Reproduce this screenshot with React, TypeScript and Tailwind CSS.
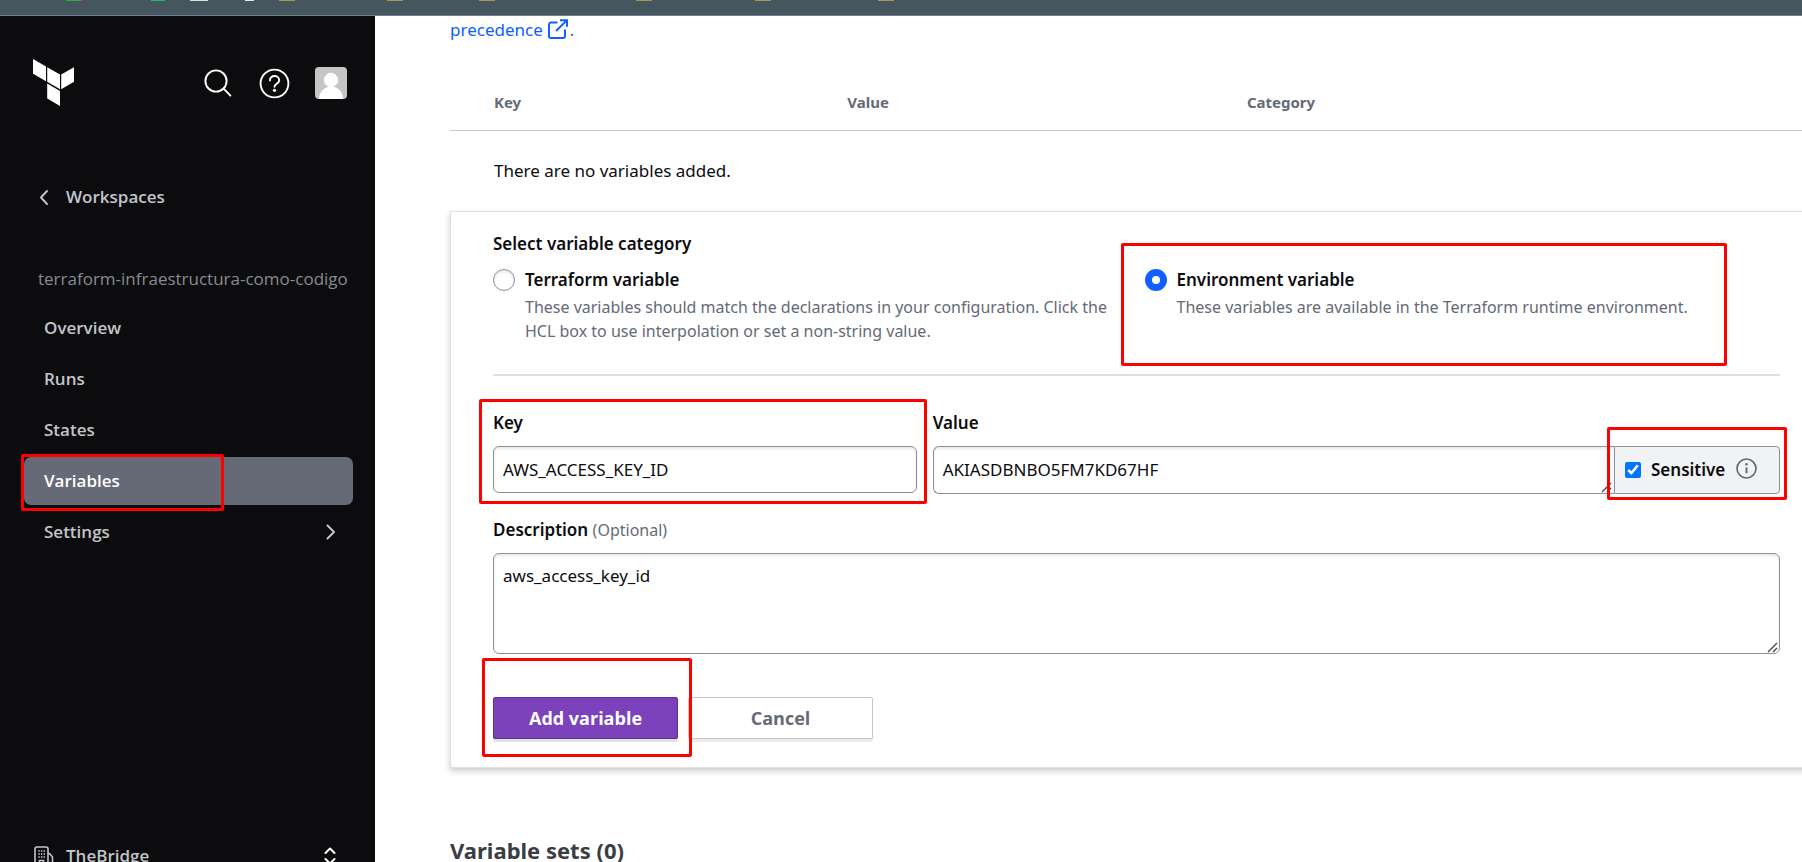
import React from "react";

const navItems = ["Overview", "Runs", "States", "Variables", "Settings"];

function Highlight({ className }: { className: string }) {
  return <div aria-hidden="true" className={`pointer-events-none absolute z-10 rounded-xs border-3 border-[#ff0000] ${className}`} />;
}

function ResizeGrip() {
  return (
    <svg width="11" height="11" viewBox="0 0 11 11" fill="none" stroke="#4a4a4a" strokeWidth="1.4" aria-hidden="true" className="pointer-events-none absolute right-[2px] bottom-[1px]">
      <path d="M1 10 10 1M6 10l4-4" />
    </svg>
  );
}

function BookmarkBar() {
  const folder = "h-px w-4 shrink-0 bg-[#a8964a]";
  return (
    <div className="flex h-4 items-start border-b border-[#6b7f8c] bg-[#45565f]" aria-hidden="true">
      <div className="ml-[62px] h-px w-[4px] bg-[#1a7a35]" />
      <div className="h-px w-[14px] bg-[#34a853]" />
      <div className="h-px w-[2px] bg-[#e0443a]" />
      <div className="ml-[69px] h-px w-[14px] bg-[#20c060]" />
      <div className="ml-[25px] h-px w-[18px] bg-[#d5e3da]" />
      <div className="ml-[37px] h-px w-[9px] bg-[#e4e6ee]" />
      <div className={`ml-[25px] ${folder}`} />
      <div className={`ml-[92px] ${folder}`} />
      <div className={`ml-[76px] ${folder}`} />
      <div className={`ml-[141px] ${folder}`} />
      <div className={`ml-[103px] ${folder}`} />
      <div className={`ml-[107px] ${folder}`} />
    </div>
  );
}

function TerraformLogo() {
  return (
    <svg width="42" height="48" viewBox="0 0 42 48" fill="#fff" aria-label="Terraform">
      <path d="M0 0 13 7.6V22.2L0 14.8z" />
      <path d="M14.2 8.2 27 15.6V30.2L14.2 22.8z" />
      <path d="M28.2 15.6 41 8.2V22.8L28.2 30.2z" />
      <path d="M14.2 24.6 27 32V47L14.2 39.5z" />
    </svg>
  );
}

function Sidebar() {
  return (
    <aside className="flex w-[375px] shrink-0 flex-col bg-[#0c0c0e] font-['Open_Sans','Noto_Sans',sans-serif] text-[17px] font-semibold text-[#c2c5cb]">
      <div className="mt-[42px] flex h-[50px] items-center pr-7 pl-[33px]">
        <a href="#home" className="mr-auto"><TerraformLogo /></a>
        <button type="button" aria-label="Search" className="mr-[27px]">
          <svg width="28" height="28" viewBox="0 0 28 28" fill="none" stroke="#fff" strokeWidth="1.9" strokeLinecap="round">
            <circle cx="12" cy="12" r="10.6" />
            <path d="M19.6 19.6 26.4 26.6" />
          </svg>
        </button>
        <button type="button" aria-label="Help" className="mr-[25px]">
          <svg width="31" height="31" viewBox="0 0 31 31" fill="none" stroke="#fff" strokeWidth="1.9" strokeLinecap="round" strokeLinejoin="round">
            <circle cx="15.5" cy="15.5" r="13.9" />
            <path d="M10.9 12.4c0-2.6 2-4.4 4.6-4.4s4.7 1.7 4.7 4.2c0 3.6-4.7 3.4-4.7 6.6" />
            <circle cx="15.5" cy="22.3" r="1.6" fill="#fff" stroke="none" />
          </svg>
        </button>
        <button type="button" aria-label="Account" className="overflow-hidden rounded-[4px]">
          <svg width="32" height="32" viewBox="0 0 32 32">
            <rect width="32" height="32" fill="#c5c5c5" />
            <circle cx="16" cy="13" r="7.2" fill="#fff" />
            <path d="M4 32c0-7 5-12.6 12-12.6S28 25 28 32z" fill="#fff" />
          </svg>
        </button>
      </div>

      <a href="#workspaces" className="mt-[75px] flex h-7 items-center pl-10">
        <svg width="8" height="15" viewBox="0 0 8 15" fill="none" stroke="currentColor" strokeWidth="1.9" strokeLinecap="round" strokeLinejoin="round" className="mr-[18px]">
          <path d="M7 1 1 7.5 7 14" />
        </svg>
        Workspaces
      </a>

      <div className="mt-[54px] flex h-7 items-center pl-[38px] font-medium whitespace-nowrap text-[#878a93]">
        terraform-infraestructura-como-codigo
      </div>

      <nav className="mt-[11px] flex flex-col gap-[3px] pr-[22px] pl-6">
        {navItems.map((item) => {
          const active = item === "Variables";
          return (
            <a
              key={item}
              href={`#${item.toLowerCase()}`}
              aria-current={active ? "page" : undefined}
              className={`relative flex h-12 items-center rounded-[7px] px-5 ${active ? "bg-[#656a76] text-white" : ""}`}
            >
              {item}
              {item === "Settings" && (
                <svg width="9" height="16" viewBox="0 0 9 16" fill="none" stroke="currentColor" strokeWidth="2" strokeLinecap="round" strokeLinejoin="round" className="mr-[-2px] ml-auto">
                  <path d="M1.5 1.5 8 8l-6.500 6.500" />
                </svg>
              )}
              {active && <Highlight className="-top-[3px] -bottom-[6px] -left-[3px] w-[203px]" />}
            </a>
          );
        })}
      </nav>

      <button type="button" className="mt-auto -mb-2 flex h-7 items-center pr-[39px] pl-[34px] text-left">
        <svg width="20" height="20" viewBox="0 0 20 20" fill="none" stroke="currentColor" strokeWidth="1.6" className="mr-3">
          <path d="M1 20V3a2 2 0 0 1 2-2h9a2 2 0 0 1 2 2v17M14 7.500h1.500L18.500 11v9" />
          <path d="M4.300 5h1.500M6.900 5h1.500M9.500 5H11M4.300 8h1.500M6.900 8h1.500M9.500 8H11M4.300 11h1.500M6.900 11h1.500M9.500 11H11M5.500 20v-5.500h4V20" />
        </svg>
        TheBridge
        <svg width="12" height="18" viewBox="0 0 12 18" fill="none" stroke="#fff" strokeWidth="2" strokeLinecap="round" strokeLinejoin="round" className="ml-auto">
          <path d="M1.500 6 6 1.500 10.500 6M1.500 12 6 16.500 10.500 12" />
        </svg>
      </button>
    </aside>
  );
}

const fieldClass =
  "block w-full resize-none border border-[#8c909c] bg-white px-[9px] text-[17px] leading-6 text-[#0c0c0e] shadow-[inset_0_2px_3px_rgba(101,106,118,0.15)]";

function VariableForm() {
  return (
    <form className="border border-[#dedfe3] bg-white pt-5 pr-[43px] pb-[28px] pl-[42px] shadow-[0_3px_6px_rgba(101,106,118,0.35)]" onSubmit={(e) => e.preventDefault()}>
      <fieldset>
        <legend className="text-[17px] leading-6 font-semibold">Select variable category</legend>
        <div className="mt-3 grid grid-cols-2 gap-4">
          <div className="flex items-start gap-[10px]">
            <input id="cat-terraform" type="radio" name="category" className="mt-px size-[22px] shrink-0 appearance-none rounded-full border border-[#8c909c] bg-white shadow-[inset_0_2px_3px_rgba(101,106,118,0.15)]" />
            <div>
              <label htmlFor="cat-terraform" className="block text-[17px] leading-6 font-semibold">Terraform variable</label>
              <p className="mt-[3px] text-[16px] leading-6 text-[#656a76]">
                These variables should match the declarations in your configuration. Click the HCL box to use interpolation or set a non-string value.
              </p>
            </div>
          </div>
          <div className="relative flex items-start gap-[10px]">
            <input id="cat-env" type="radio" name="category" defaultChecked className="mt-px size-[22px] shrink-0 appearance-none rounded-full border-[7px] border-[#1060ff] bg-white" />
            <div>
              <label htmlFor="cat-env" className="block text-[17px] leading-6 font-semibold">Environment variable</label>
              <p className="mt-[3px] text-[16px] leading-6 text-[#656a76]">These variables are available in the Terraform runtime environment.</p>
            </div>
            <Highlight className="-top-[25px] right-[53px] -bottom-[23px] -left-6" />
          </div>
        </div>
      </fieldset>

      <hr className="mt-[31px] border-t-2 border-[#dedfe3]" />

      <div className="mt-[35px] grid grid-cols-[1fr_2fr] gap-4">
        <div className="relative">
          <label htmlFor="key" className="block text-[17px] leading-6 font-semibold">Key</label>
          <input id="key" type="text" defaultValue="AWS_ACCESS_KEY_ID" className={`mt-[11px] h-[47px] rounded-[6px] ${fieldClass}`} />
          <Highlight className="-top-3 -right-[10px] -bottom-[10px] -left-[14px]" />
        </div>
        <div>
          <label htmlFor="value" className="block text-[17px] leading-6 font-semibold">Value</label>
          <div className="mt-[11px] flex h-12">
            <div className="relative min-w-0 flex-1">
              <textarea id="value" rows={1} defaultValue="AKIASDBNBO5FM7KD67HF" className={`h-12 overflow-hidden rounded-l-[6px] border-r-0 py-[11px] ${fieldClass}`} />
              <ResizeGrip />
            </div>
            <div className="relative flex w-[166px] shrink-0 items-center rounded-r-[4px] border border-[#8c909c] bg-[#f1f2f3] pl-[10px]">
              <input id="sensitive" type="checkbox" defaultChecked className="size-4 accent-[#0075ff]" />
              <label htmlFor="sensitive" className="ml-[10px] text-[17px] leading-6 font-semibold">Sensitive</label>
              <svg width="21" height="21" viewBox="0 0 21 21" fill="none" stroke="#656a76" strokeWidth="1.7" className="mb-[3px] ml-[11px]">
                <circle cx="10.500" cy="10.500" r="9.500" />
                <path d="M10.500 9.500v5.700" strokeWidth="2" />
                <circle cx="10.500" cy="6.300" r="1.300" fill="#656a76" stroke="none" />
              </svg>
              <Highlight className="-top-5 -right-2 -bottom-[7px] -left-2" />
            </div>
          </div>
        </div>
      </div>

      <label htmlFor="description" className="mt-6 block text-[17px] leading-6 font-semibold">
        Description <span className="text-[16px] font-normal text-[#656a76]">(Optional)</span>
      </label>
      <div className="relative mt-[11px]">
        <textarea id="description" defaultValue="aws_access_key_id" className={`h-[101px] rounded-[6px] py-[10px] ${fieldClass}`} />
        <ResizeGrip />
      </div>

      <div className="mt-[43px] flex gap-[10px] font-['Open_Sans','Noto_Sans',sans-serif] text-[18px] font-bold">
        <div className="relative">
          <button type="submit" className="block h-[42px] w-[185px] rounded-xs border border-[#5c3391] bg-[#7b42bc] text-white shadow-[0_3px_1px_rgba(0,0,0,0.12)]">Add variable</button>
          <Highlight className="-top-[39px] -right-[14px] -bottom-[18px] -left-[11px]" />
        </div>
        <button type="button" className="block h-[42px] w-[185px] rounded-xs border border-[#c2c5cb] bg-white text-[#656a76] shadow-[0_3px_1px_rgba(0,0,0,0.08)]">Cancel</button>
      </div>
    </form>
  );
}

export default function App() {
  return (
    <div className="relative flex h-screen flex-col overflow-hidden bg-white font-['Noto_Sans','Open_Sans',sans-serif] text-[#0c0c0e]">
      <BookmarkBar />
      <div className="flex min-h-0 flex-1">
        <Sidebar />
        <main className="-mr-[22px] min-w-0 flex-1 pl-[75px]">
          <p className="mt-[2px] flex h-6 items-center text-[17px] leading-6">
            <a href="#precedence" className="flex items-center gap-[5px] text-[#1060ff]">
              precedence
              <svg width="20" height="20" viewBox="0 0 20 20" fill="none" stroke="currentColor" strokeWidth="2" className="mb-[3px]">
                <path d="M9.500 3.500H3a2 2 0 0 0-2 2V17a2 2 0 0 0 2 2h12a2 2 0 0 0 2-2v-6.500M12 1.200h7v6.600M18.800 1.400 8 12" />
              </svg>
            </a>
            <span className="ml-[2px] text-[#656a76]">.</span>
          </p>
          <table className="mt-[37px] w-full table-fixed text-left">
            <thead>
              <tr className="h-[51px] border-b border-[#c2c5cb] text-[15px] text-[#656a76]">
                <th className="w-[26%] pb-[5px] pl-11 font-bold">Key</th>
                <th className="w-[32%] pb-[5px] pl-10 font-bold">Value</th>
                <th className="pb-[5px] font-bold">Category</th>
              </tr>
            </thead>
            <tbody>
              <tr className="h-[81px] text-[17px]">
                <td colSpan={3} className="pl-11">There are no variables added.</td>
              </tr>
            </tbody>
          </table>
          <VariableForm />
          <h2 className="mt-[66px] text-[22px] leading-8 font-bold text-[#3b3d45]">Variable sets (0)</h2>
        </main>
      </div>
    </div>
  );
}
